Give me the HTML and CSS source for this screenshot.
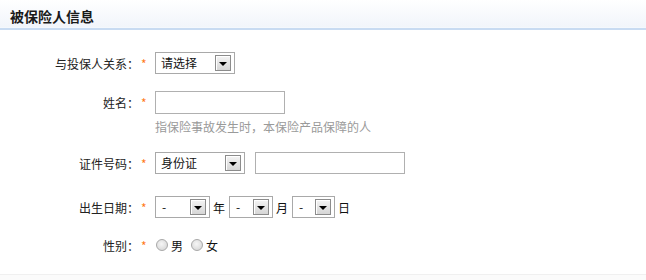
FILE: index.html
```html
<!DOCTYPE html>
<html lang="zh-CN">
<head>
<meta charset="utf-8">
<title>被保险人信息</title>
<link rel="stylesheet" href="styles.css">
</head>
<body>
<div class="panel">
  <div class="head"><h2 class="title">被保险人信息</h2></div>
  <div class="form">
    <div class="row r1">
      <span class="label">与投保人关系：</span><span class="req">*</span>
      <div class="sel w80"><span class="val">请选择</span><span class="btn"><i class="arr"></i></span></div>
    </div>
    <div class="row r2">
      <span class="label">姓名：</span><span class="req">*</span>
      <div class="inp w130"></div>
    </div>
    <div class="hint">指保险事故发生时，本保险产品保障的人</div>
    <div class="row r3">
      <span class="label">证件号码：</span><span class="req">*</span>
      <div class="sel w90"><span class="val">身份证</span><span class="btn"><i class="arr"></i></span></div>
      <div class="inp w150 idno"></div>
    </div>
    <div class="row r4">
      <span class="label">出生日期：</span><span class="req">*</span>
      <div class="sel w55"><span class="val dash">-</span><span class="btn"><i class="arr"></i></span></div>
      <span class="unit">年</span>
      <div class="sel w44"><span class="val dash">-</span><span class="btn"><i class="arr"></i></span></div>
      <span class="unit">月</span>
      <div class="sel w43"><span class="val dash">-</span><span class="btn"><i class="arr"></i></span></div>
      <span class="unit">日</span>
    </div>
    <div class="row r5">
      <span class="label">性别：</span><span class="req">*</span>
      <span class="radio"></span><span class="opt">男</span>
      <span class="radio"></span><span class="opt">女</span>
    </div>
  </div>
  <div class="foot"></div>
</div>
</body>
</html>
```
FILE: styles.css
```css
html, body {
  margin: 0;
  padding: 0;
  background: #fff;
}
body {
  font-family: "Noto Sans CJK SC", "Liberation Sans", sans-serif;
  font-size: 12px;
  color: #222;
  width: 646px;
  height: 280px;
  overflow: hidden;
}
.panel {
  display: flex;
  flex-direction: column;
  height: 280px;
}
.head {
  height: 27px;
  background: linear-gradient(#ffffff, #f1f5fb);
  border-bottom: 1px solid #f4f8fd;
  box-shadow: 0 2px 0 #c8dbf2;
  margin-bottom: 2px;
}
.title {
  margin: 0;
  padding-left: 10px;
  font-size: 14px;
  font-weight: bold;
  line-height: 32px;
  color: #1a1a1a;
}
.form {
  padding-top: 22px;
  flex: 1;
}
.row {
  display: flex;
  align-items: center;
  height: 22px;
}
.label {
  width: 139px;
  text-align: right;
  white-space: nowrap;
}
.req {
  width: 16px;
  padding-left: 2px;
  box-sizing: border-box;
  color: #ff7a1a;
  font-size: 12px;
}
.r2 { margin-top: 17px; height: 23px; }
.hint {
  margin-top: 6px;
  padding-left: 155px;
  line-height: 14px;
  color: #9a9a9a;
}
.r3 { margin-top: 18px; }
.r4 { margin-top: 22px; }
.r5 { margin-top: 16px; }

.sel {
  box-sizing: border-box;
  height: 22px;
  border: 1px solid #a9a9a9;
  background: #fff;
  display: flex;
  align-items: center;
  justify-content: space-between;
  padding: 0 3px 0 5px;
}
.val {
  line-height: 20px;
  font-size: 12px;
  color: #111;
}
.dash { padding-left: 1px; }
.btn {
  box-sizing: border-box;
  width: 16px;
  height: 16px;
  border: 1px solid #8c8c8c;
  background: linear-gradient(#f4f4f4, #d6d6d6);
  box-shadow: inset 1px 1px 0 #fff;
  display: flex;
  align-items: center;
  justify-content: center;
}
.arr {
  width: 0;
  height: 0;
  border-left: 4px solid transparent;
  border-right: 4px solid transparent;
  border-top: 4px solid #000;
  margin-top: 1px;
}
.w80 { width: 80px; }
.w90 { width: 90px; }
.w55 { width: 55px; }
.w44 { width: 44px; }
.w43 { width: 43px; }
.inp {
  box-sizing: border-box;
  height: 23px;
  border: 1px solid #b0b0b0;
  background: #fff;
}
.w130 { width: 130px; }
.w150 { width: 150px; height: 22px; }
.idno { margin-left: 10px; }
.unit {
  margin: 0 4px 0 3px;
  color: #111;
}
.radio {
  box-sizing: border-box;
  width: 12px;
  height: 12px;
  border-radius: 50%;
  border: 1px solid #a8a8a8;
  background: radial-gradient(circle at 45% 40%, #f6f6f6 0, #dcdcdc 70%);
  margin-left: 1px;
  margin-right: 3px;
}
.opt {
  margin-right: 7px;
  color: #111;
}
.foot {
  height: 5px;
  border-top: 1px solid #f0f0f0;
  background: #fbfbfb;
}
```
